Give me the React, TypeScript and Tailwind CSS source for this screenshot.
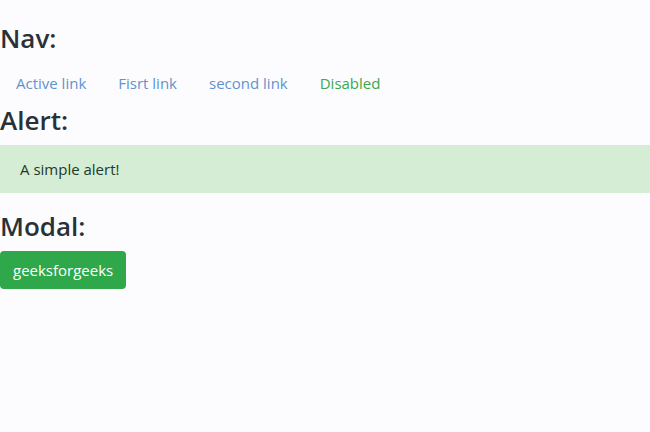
export default function App() {
  const links = [
    { label: 'Active link', cls: 'text-[#5f93cc]' },
    { label: 'Fisrt link', cls: 'text-[#5f93cc]' },
    { label: 'second link', cls: 'text-[#5f93cc]' },
    { label: 'Disabled', cls: 'text-[#3aa84c]' },
  ];

  return (
    <div className="min-h-[432px] bg-[#fcfcff] pt-[21px] text-[#2a3136] [font-family:'Open_Sans',sans-serif]">
      <h3 className="mb-2 text-[26px] font-semibold leading-[34px]">Nav:</h3>
      <ul className="flex">
        {links.map((l) => (
          <li key={l.label}>
            <a className={`block px-4 py-2 text-[15px] leading-6 ${l.cls}`}>{l.label}</a>
          </li>
        ))}
      </ul>

      <h3 className="mb-2 text-[26px] font-semibold leading-[34px]">Alert:</h3>
      <div className="mb-4 bg-[#d5edd4] px-5 py-3 text-[15px] leading-6 text-[#1f3a26]">A simple alert!</div>

      <h3 className="mb-2 text-[26px] font-semibold leading-[34px]">Modal:</h3>
      <button className="rounded bg-[#2ea84a] px-[13px] py-[7px] text-[15px] leading-6 text-white">geeksforgeeks</button>
    </div>
  );
}
